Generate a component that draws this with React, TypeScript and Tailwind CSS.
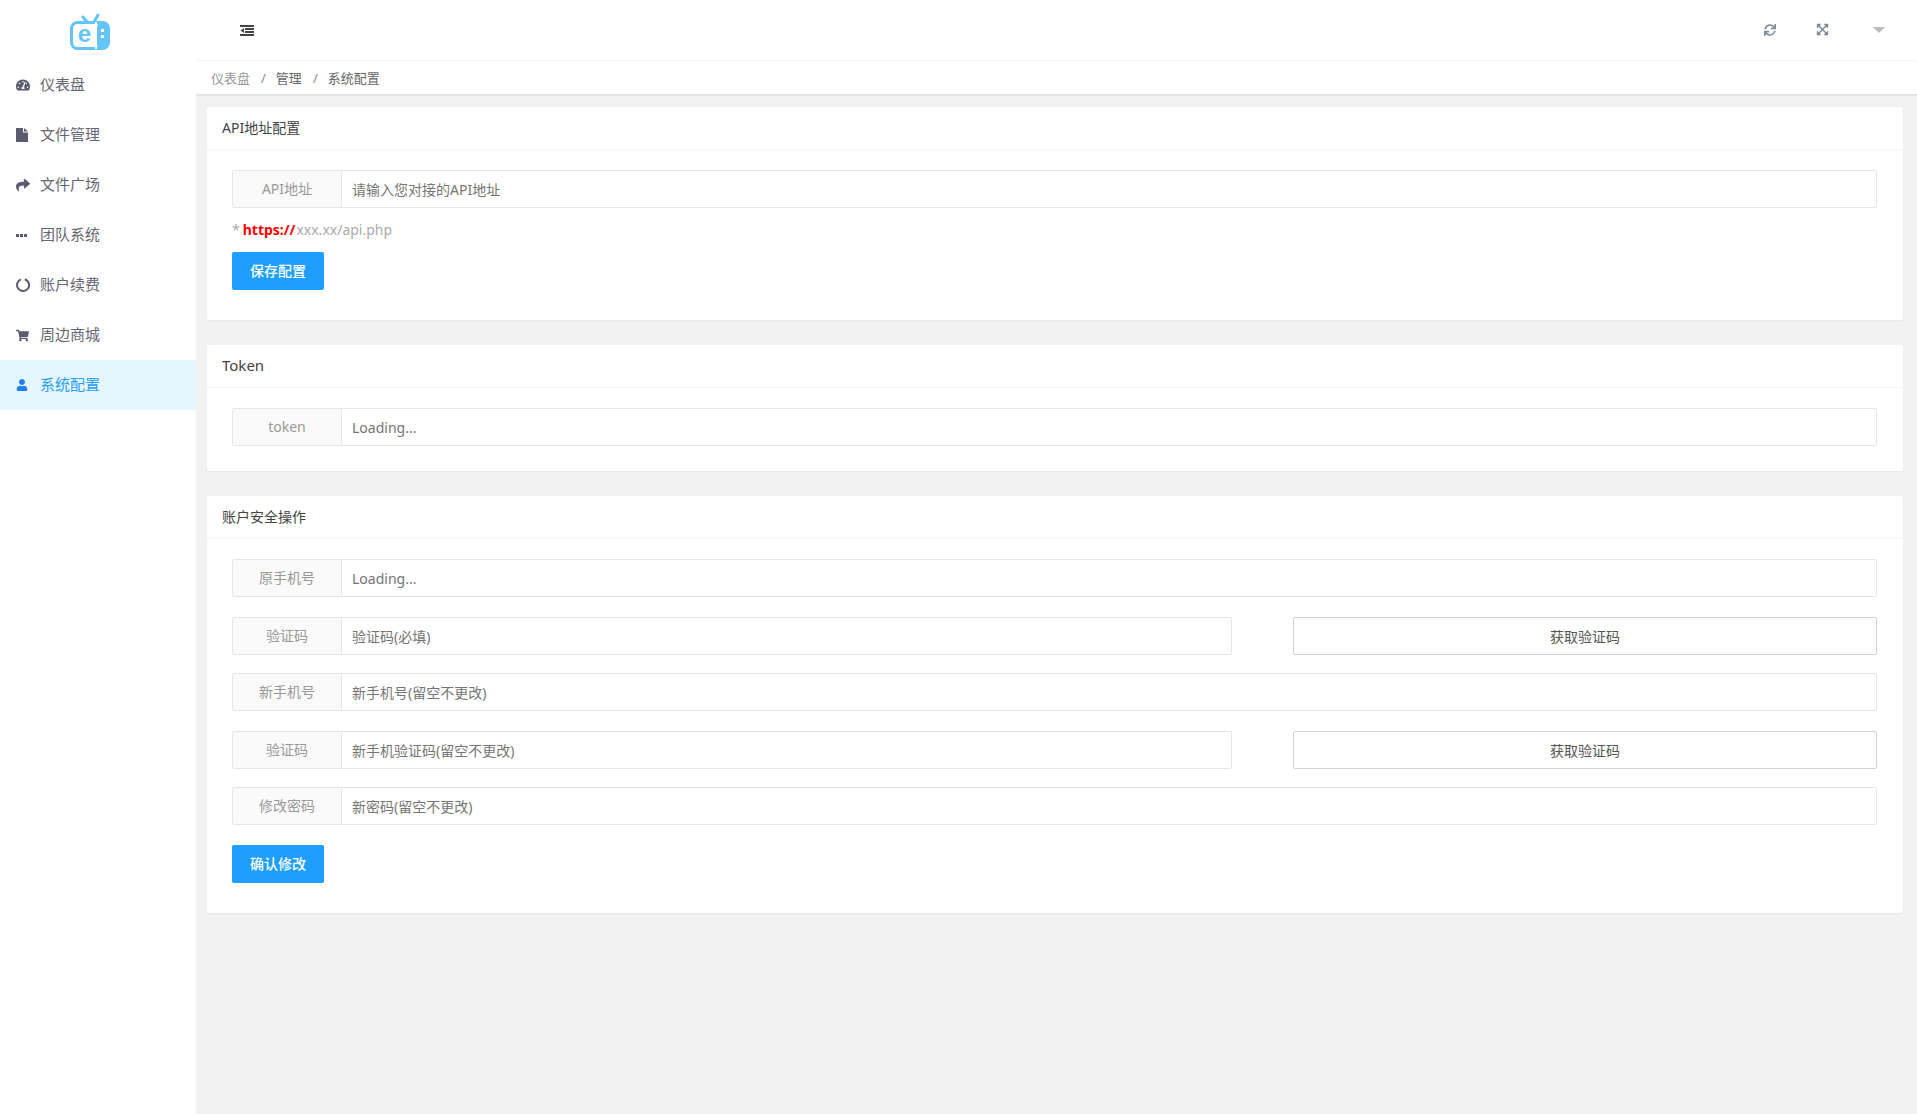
import React from 'react';
import {
  FaTachometerAlt,
  FaShare,
  FaShoppingCart,
  FaUser,
  FaSync,
  FaExpandArrowsAlt,
} from 'react-icons/fa';

function FileIcon() {
  return (
    <svg width="12" height="14" viewBox="0 0 12 14" fill="currentColor">
      <path d="M0 0h7v4.5h5V14H0z" />
      <path d="M8 0l4 3.5H8z" />
    </svg>
  );
}

function DotsIcon() {
  return (
    <svg width="11" height="3" viewBox="0 0 11 3" fill="currentColor">
      <rect width="3" height="3" />
      <rect x="4" width="3" height="3" />
      <rect x="8" width="3" height="3" />
    </svg>
  );
}

function RingIcon() {
  return (
    <svg width="14" height="14" viewBox="0 0 14 14" fill="none" stroke="currentColor" strokeWidth="2">
      <path d="M8.8 1.3A6 6 0 1 1 5 1.4" />
    </svg>
  );
}

function MenuFoldIcon() {
  return (
    <svg width="14" height="11" viewBox="0 0 14 11" fill="#444">
      <rect width="14" height="2" />
      <rect x="5" y="3" width="9" height="2" />
      <rect x="5" y="6" width="9" height="2" />
      <rect y="9" width="14" height="2" />
      <path d="M4 3v5L0.5 5.5z" />
    </svg>
  );
}

const menu = [
  { name: '仪表盘', icon: <FaTachometerAlt size={14} /> },
  { name: '文件管理', icon: <FileIcon /> },
  { name: '文件广场', icon: <FaShare size={14} /> },
  { name: '团队系统', icon: <DotsIcon /> },
  { name: '账户续费', icon: <RingIcon /> },
  { name: '周边商城', icon: <FaShoppingCart size={13} /> },
  { name: '系统配置', icon: <FaUser size={12} />, active: true },
];

function Logo() {
  return (
    <svg width="40" height="38" viewBox="0 0 40 38" fill="none">
      <path d="M13 4 L17 9 M28 2 L24 9" stroke="#63c5fb" strokeWidth="3" strokeLinecap="round" />
      <rect x="1.5" y="9.5" width="37" height="26" rx="6" stroke="#63c5fb" strokeWidth="3" fill="#fff" />
      <rect x="27" y="9" width="12" height="27" rx="5" fill="#63c5fb" />
      <rect x="25" y="9" width="2" height="27" fill="#fff" />
      <rect x="31" y="16" width="3" height="3" fill="#fff" />
      <rect x="31" y="22" width="3" height="3" fill="#fff" />
      <text x="14.5" y="29" textAnchor="middle" fontSize="24" fontWeight="700" fill="#63c5fb" fontFamily="'Liberation Sans', sans-serif">e</text>
    </svg>
  );
}

function Sidebar() {
  return (
    <aside className="w-[196px] shrink-0 bg-white">
      <div className="h-[60px] flex items-start justify-center pt-[13px] pr-[16px]">
        <Logo />
      </div>
      {menu.map((item) => (
        <div
          key={item.name}
          className={`h-[50px] flex items-center pl-[16px] pb-[2px] text-[15px] ${
            item.active ? 'bg-[#e6f6ff] text-[#2a9ff0]' : 'text-[#666672]'
          }`}
        >
          <span className={`w-[24px] shrink-0 mt-[2px] flex items-center ${item.active ? 'text-[#1e7fff]' : 'text-[#5c5c70]'}`}>
            {item.icon}
          </span>
          {item.name}
        </div>
      ))}
    </aside>
  );
}

function Header() {
  return (
    <div className="h-[61px] flex items-center justify-between bg-white border-b border-[#f5f5f5] pb-[1px]">
      <span className="ml-[44px] mt-[1px]">
        <MenuFoldIcon />
      </span>
      <div className="flex items-center text-[#808b96]">
        <FaSync size={12} />
        <span className="ml-[40px]">
          <FaExpandArrowsAlt size={13} />
        </span>
        <span className="ml-[44px] mr-[32px] w-0 h-0 border-x-[6px] border-x-transparent border-t-[6px] border-t-[#bbbbbb]" />
      </div>
    </div>
  );
}

function Breadcrumb() {
  return (
    <div className="h-[35px] flex items-center bg-white pl-[15px] pt-[2px] border-b-2 border-[#e4e4e4] text-[13px]">
      <span className="text-[#999]">仪表盘</span>
      <span className="ml-[11px] mr-[10px] text-[#888]">/</span>
      <span className="text-[#666]">管理</span>
      <span className="ml-[11px] mr-[10px] text-[#888]">/</span>
      <span className="text-[#666]">系统配置</span>
    </div>
  );
}

function Card({ title, titleClass, children }: { title: string; titleClass?: string; children: React.ReactNode }) {
  return (
    <section className="bg-white rounded-[2px] shadow-[0_1px_2px_rgba(0,0,0,0.05)] mb-[25px]">
      <div className={`h-[43px] flex items-center px-[15px] pb-[2px] border-b border-[#f6f6f6] text-[#444] ${titleClass ?? 'text-[14px]'}`}>
        {title}
      </div>
      {children}
    </section>
  );
}

function Field({ label, placeholder, className }: { label: string; placeholder: string; className?: string }) {
  return (
    <div className={`h-[38px] flex border border-[#e6e6e6] rounded-[2px] text-[14px] ${className ?? ''}`}>
      <div className="w-[109px] shrink-0 flex items-center justify-center pb-[1px] bg-[#fafafa] border-r border-[#e6e6e6] text-[#999]">
        {label}
      </div>
      <input
        className="flex-1 min-w-0 pl-[10px] bg-white outline-none placeholder:text-[#757575]"
        placeholder={placeholder}
      />
    </div>
  );
}

function FieldWithCode({ placeholder }: { placeholder: string }) {
  return (
    <div className="flex">
      <Field label="验证码" placeholder={placeholder} className="flex-1" />
      <button className="ml-[61px] w-[584px] h-[38px] bg-white border border-[#d2d2d2] rounded-[2px] text-[14px] text-[#555]">
        获取验证码
      </button>
    </div>
  );
}

function PrimaryButton({ children }: { children: React.ReactNode }) {
  return (
    <button className="block w-[92px] h-[38px] pb-[1px] bg-[#1e9fff] rounded-[2px] text-[14px] font-medium text-white">
      {children}
    </button>
  );
}

export default function App() {
  return (
    <div className="flex min-h-[1114px] bg-[#f2f2f2] font-['Noto_Sans','Noto_Sans_CJK_SC',sans-serif]">
      <Sidebar />
      <main className="flex-1 min-w-0">
        <Header />
        <Breadcrumb />
        <div className="pt-[11px] pl-[11px] pr-[14px]">
          <Card title="API地址配置">
            <div className="pl-[25px] pr-[26px] pt-[20px] pb-[30px]">
              <Field label="API地址" placeholder="请输入您对接的API地址" />
              <p className="h-[44px] pb-[2px] flex items-center text-[14px] text-[#aaa]">
                <span className="mr-[2px]">*</span>
                <span className="ml-[1px] font-bold text-[#ff0000]">https://</span>
                <span className="ml-[1px]">xxx.xx/api.php</span>
              </p>
              <PrimaryButton>保存配置</PrimaryButton>
            </div>
          </Card>
          <Card title="Token" titleClass="text-[15px]">
            <div className="pl-[25px] pr-[26px] pt-[20px] pb-[25px]">
              <Field label="token" placeholder="Loading..." />
            </div>
          </Card>
          <Card title="账户安全操作">
            <div className="pl-[25px] pr-[26px] pt-[20px] pb-[30px]">
              <Field label="原手机号" placeholder="Loading..." className="mb-[20px]" />
              <div className="mb-[18px]">
                <FieldWithCode placeholder="验证码(必填)" />
              </div>
              <Field label="新手机号" placeholder="新手机号(留空不更改)" className="mb-[20px]" />
              <div className="mb-[18px]">
                <FieldWithCode placeholder="新手机验证码(留空不更改)" />
              </div>
              <Field label="修改密码" placeholder="新密码(留空不更改)" className="mb-[20px]" />
              <PrimaryButton>确认修改</PrimaryButton>
            </div>
          </Card>
        </div>
      </main>
    </div>
  );
}
